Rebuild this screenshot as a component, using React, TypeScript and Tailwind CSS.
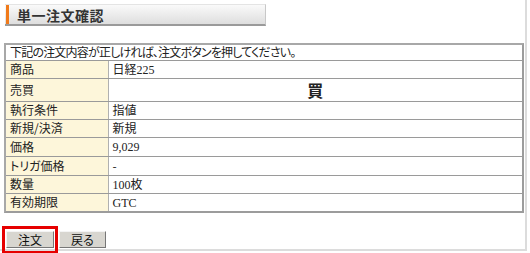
import React from "react";

const rows: { label: string; value: React.ReactNode; h: number; big?: boolean }[] = [
  { label: "商品", value: <>日経<span className="font-['Liberation_Serif',serif]">225</span></>, h: 18 },
  { label: "売買", value: "買", h: 23, big: true },
  { label: "執行条件", value: "指値", h: 18 },
  { label: "新規/決済", value: "新規", h: 18 },
  { label: "価格", value: <span className="font-['Liberation_Serif',serif]">9,029</span>, h: 19 },
  { label: "トリガ価格", value: "-", h: 19 },
  { label: "数量", value: <><span className="font-['Liberation_Serif',serif]">100</span>枚</>, h: 18 },
  { label: "有効期限", value: <span className="font-['Liberation_Serif',serif]">GTC</span>, h: 18 },
];

export default function App() {
  return (
    <div className="relative w-[530px] h-[253px] bg-white overflow-hidden font-['Noto_Sans_CJK_JP',sans-serif] text-[12px] text-[#222] [font-feature-settings:'palt']">
      <div className="w-[527px] h-[251px] border-r-2 border-b-2 border-[#dcdcdc] pt-[4px] pl-[4px] pr-[1px]">
        <div className="ml-[1px] w-[261px] h-[22px] flex items-center border-t border-[#e4e4e4] border-r border-r-[#c8c8c8] border-b-2 border-b-[#9a9a9a] bg-gradient-to-b from-[#fafafa] to-[#dedede]">
          <div className="ml-[1px] w-[3px] h-[19px] bg-[#f07a1a]" />
          <span className="ml-[8px] text-[14px] font-bold text-[#333] leading-none tracking-[0.5px]">単一注文確認</span>
        </div>
        <div className="mt-[17px] w-[520px] border-2 border-[#9c9c9c] border-l-[#a8a8a8] border-t-[#a8a8a8]">
          <table className="w-full border-collapse">
            <tbody>
              <tr className="h-[15px]">
                <td colSpan={2} className="px-[4px] py-0 leading-[14px] tracking-[-0.8px] border-b border-[#9a9a9a]">
                  下記の注文内容が正しければ、注文ボタンを押してください。
                </td>
              </tr>
              {rows.map((r, i) => (
                <tr key={i} style={{ height: r.h }}>
                  <td className={`w-[102px] px-[4px] py-0 leading-[14px] bg-[#fdf6da] border-r border-[#b0b0b0] ${i < rows.length - 1 ? "border-b border-b-[#9a9a9a]" : ""}`}>
                    {r.label}
                  </td>
                  <td className={`px-[4px] py-0 ${i < rows.length - 1 ? "border-b border-b-[#9a9a9a]" : ""} ${r.big ? "text-center text-[16px] leading-[18px] font-bold" : "leading-[14px]"}`}>
                    {r.value}
                  </td>
                </tr>
              ))}
            </tbody>
          </table>
        </div>
        <div className="mt-[13px] -ml-[2px] flex items-start gap-[1px]">
          <div className="border-[3px] border-[#e60000] px-[1px] pt-[2px] pb-[3px]">
            <button className="w-[48px] h-[17px] flex items-center justify-center bg-[#d8d6d0] border border-t-[#f4f4f4] border-l-[#f4f4f4] border-r-[#777] border-b-[#777] text-[12px] leading-none text-[#111]">
              注文
            </button>
          </div>
          <button className="mt-[5px] w-[47px] h-[17px] flex items-center justify-center bg-[#d8d6d0] border border-t-[#f4f4f4] border-l-[#f4f4f4] border-r-[#777] border-b-[#777] text-[12px] leading-none text-[#111]">
            戻る
          </button>
        </div>
      </div>
    </div>
  );
}
